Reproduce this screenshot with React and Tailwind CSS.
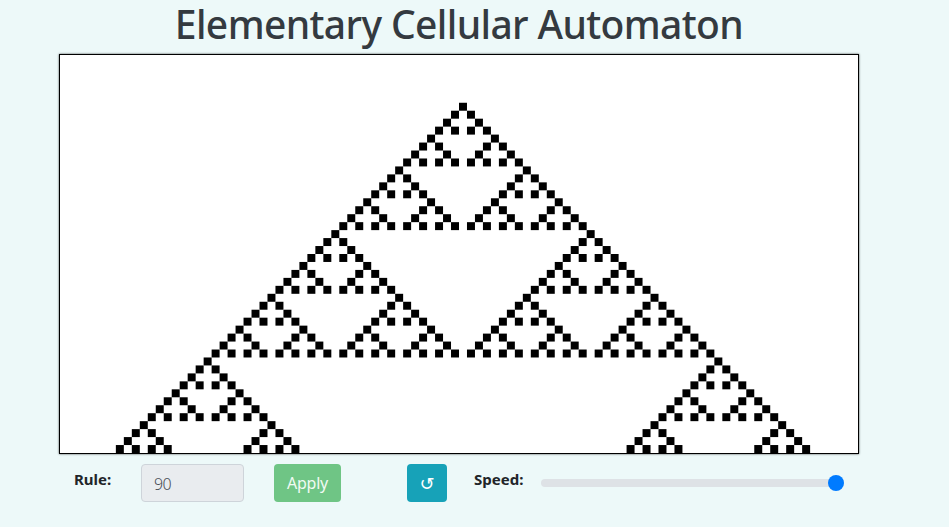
const COLUMNS = 100;
const ROWS = 50;
const SEED_ROW = 6;

// Rule 90: a cell is alive when exactly one of its two neighbours was alive.
function liveCells() {
  const cells = [];
  let row = new Array(COLUMNS).fill(0);
  row[COLUMNS / 2] = 1;
  for (let y = SEED_ROW; y < ROWS; y++) {
    row.forEach((alive, x) => {
      if (alive) cells.push([x, y]);
    });
    row = row.map((_, x) => (row[x - 1] || 0) ^ (row[x + 1] || 0));
  }
  return cells;
}

function Automaton() {
  return (
    <div className="h-[400px] w-[800px] border border-black bg-white shadow-[0_0_2px_rgba(0,0,0,0.7)]">
      <svg viewBox="0 0 100 50" preserveAspectRatio="none" className="block h-full w-full">
        {liveCells().map(([x, y]) => (
          <rect key={`${x}-${y}`} x={x} y={y} width="1" height="1" fill="#000" />
        ))}
      </svg>
    </div>
  );
}

function Controls() {
  return (
    <div className="mt-[10px] flex h-[38px] w-[800px] pl-[15px] text-base leading-6 text-[#212529]">
      <label className="w-[67px] shrink-0 pt-[3px] text-[15px] font-bold">Rule:</label>
      <input
        readOnly
        value="90"
        className="h-[38px] w-[103px] shrink-0 rounded border border-[#ced4da] bg-[#e9ecef] px-3 pt-0.5 font-[Noto_Sans] text-base font-light tracking-[-0.6px] text-[#495057] outline-none"
      />
      <button className="ml-[30px] h-[38px] w-[67px] shrink-0 rounded bg-[#6fc585] tracking-[-0.2px] text-[#f1faf3]">Apply</button>
      <button className="ml-[66px] flex h-[38px] w-10 shrink-0 items-center justify-center rounded bg-[#17a2b8] pt-0.5 font-['DejaVu_Sans'] text-lg leading-none text-white">
        ↺
      </button>
      <label className="ml-[27px] w-[67px] shrink-0 pt-[3px] text-[15px] font-bold">Speed:</label>
      <div className="flex h-[38px] w-[303px] items-center">
        <div className="flex h-2 w-full items-center justify-end rounded-full bg-[#dee2e6]">
          <div className="h-4 w-4 rounded-full bg-[#007bff]" />
        </div>
      </div>
    </div>
  );
}

export default function App() {
  return (
    <main className="h-[527px] bg-[#edf9f9] pl-[59px] font-['Noto_Sans',sans-serif]">
      <h1 className="h-[54px] w-[800px] whitespace-nowrap text-center text-[39px] font-medium leading-[48px] tracking-[-0.62px] text-[#343a40]">
        Elementary Cellular Automaton
      </h1>
      <Automaton />
      <Controls />
    </main>
  );
}
